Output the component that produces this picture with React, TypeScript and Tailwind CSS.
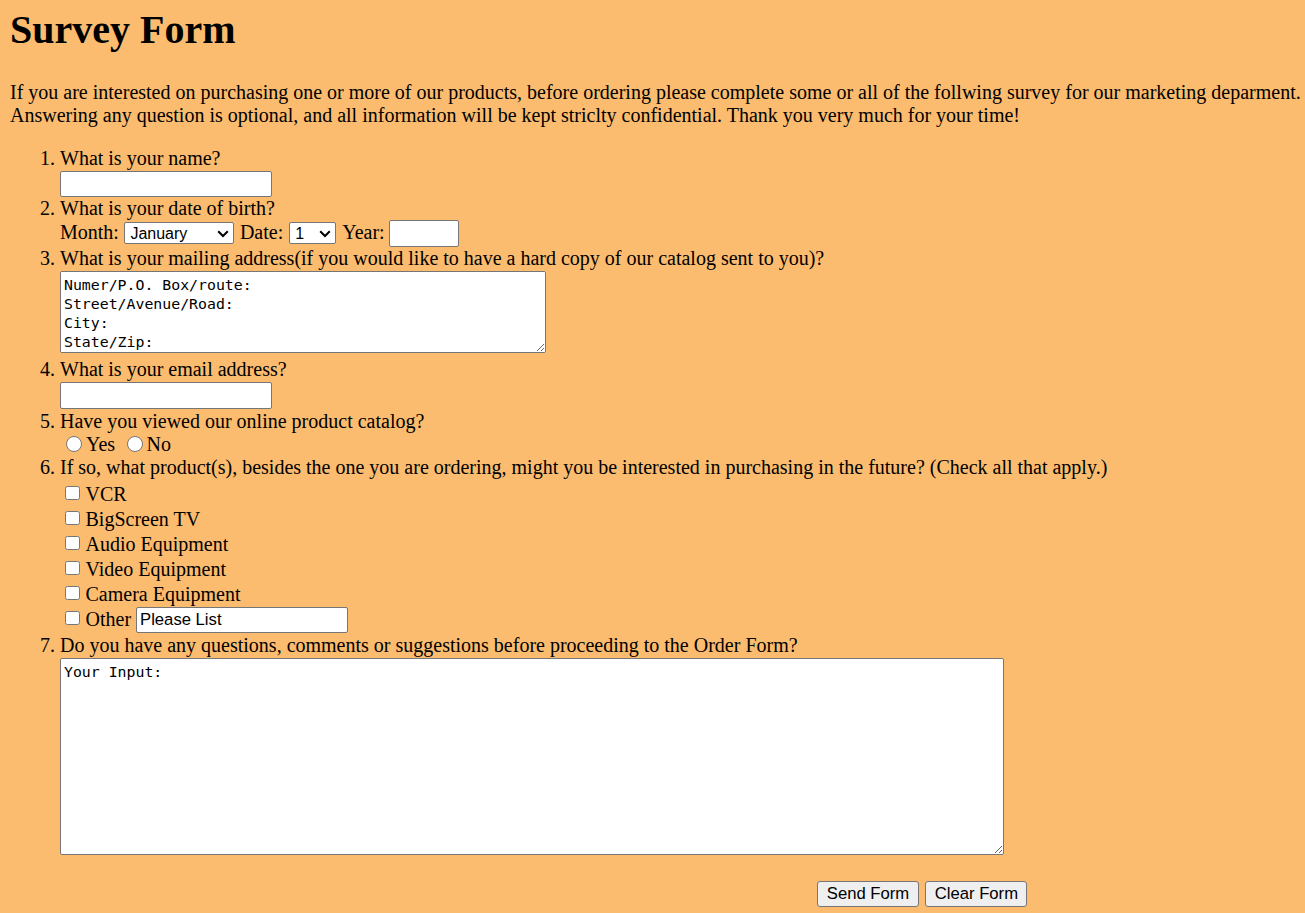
import { ReactNode } from "react";

const field =
  "block appearance-none rounded-[2px] border border-[#767676] bg-white px-[3px] text-[16.67px] leading-[19px] text-black font-['Liberation_Sans',Arial,sans-serif] outline-none";
const area =
  "block resize rounded-[2px] border border-[#767676] bg-white pl-[3px] pt-[4px] pb-[1px] text-[14.85px] leading-[19px] text-black font-['DejaVu_Sans_Mono','Liberation_Mono',monospace] outline-none";
const button =
  "h-[26px] w-[102px] rounded-[3px] border border-[#767676] bg-[#efefef] text-[16.67px] leading-[19px] text-black font-['Liberation_Sans',Arial,sans-serif]";
const box =
  "ml-[5px] mr-[6px] mt-[7.2px] block h-[14.5px] w-[14.5px] appearance-none rounded-[2.5px] border border-[#767676] bg-white";
const radio =
  "mt-[3.5px] block h-[16px] w-[16px] appearance-none rounded-full border border-[#767676] bg-white";

function Chevron() {
  return (
    <svg
      className="pointer-events-none absolute right-[5px] top-[8px]"
      width="12"
      height="8"
      viewBox="0 0 12 8"
      fill="none"
    >
      <path d="M1.2 1.3 L6 6 L10.8 1.3" stroke="#000" strokeWidth="2" />
    </svg>
  );
}

function Select({ width, options }: { width: string; options: string[] }) {
  return (
    <div className="relative mt-[2px]">
      <select
        className={`block h-[22px] ${width} appearance-none rounded-[2px] border border-[#767676] bg-white pl-[5px] text-[16px] leading-[19px] text-black font-['Liberation_Sans',Arial,sans-serif] outline-none`}
      >
        {options.map((o) => (
          <option key={o}>{o}</option>
        ))}
      </select>
      <Chevron />
    </div>
  );
}

function Check({ children }: { children: ReactNode }) {
  return (
    <div className="flex h-[25px] items-start">
      <input type="checkbox" className={box} />
      <span className="mt-[4.25px]">{children}</span>
    </div>
  );
}

function Label({ children }: { children: ReactNode }) {
  return <div className="h-[23px]">{children}</div>;
}

const months = [
  "January",
  "February",
  "March",
  "April",
  "May",
  "June",
  "July",
  "August",
  "September",
  "October",
  "November",
  "December",
];
const days = Array.from({ length: 31 }, (_, i) => String(i + 1));

export default function App() {
  return (
    <div className="min-h-screen bg-[#fbbc6f] px-[10px] pt-[7px] pb-[6px] text-[20px] leading-[23px] text-black font-['Liberation_Serif','Times_New_Roman',serif]">
      <h1 className="mb-[28px] text-[40px] font-bold leading-[46px]">Survey Form</h1>

      <p className="whitespace-nowrap">
        If you are interested on purchasing one or more of our products, before ordering please
        complete some or all of the follwing survey for our marketing deparment.
        <br />
        Answering any question is optional, and all information will be kept striclty
        confidential. Thank you very much for your time!
      </p>

      {/* rows are flex so the inputs' top margins stay inside them */}
      <ol className="mb-[20px] mt-[20px] list-decimal pl-[50px]">
        <li>
          <Label>What is your name?</Label>
          <div className="flex h-[27px] items-start">
            <input type="text" className={`${field} mt-[0.7px] h-[26px] w-[212px]`} />
          </div>
        </li>

        <li>
          <Label>What is your date of birth?</Label>
          <div className="flex h-[27px] items-start">
            <span className="mt-[1px]">Month:</span>
            <div className="ml-[5.5px]">
              <Select width="w-[110px]" options={months} />
            </div>
            <span className="ml-[5.5px] mt-[1px]">Date:</span>
            <div className="ml-[6px]">
              <Select width="w-[47px]" options={days} />
            </div>
            <span className="ml-[6px] mt-[1px]">Year:</span>
            <input type="text" className={`${field} ml-[4px] h-[27px] w-[70px]`} />
          </div>
        </li>

        <li>
          <Label>
            What is your mailing address(if you would like to have a hard copy of our catalog sent
            to you)?
          </Label>
          <div className="flex h-[88px] items-start">
            <textarea
              className={`${area} mt-[1px] h-[82px] w-[486px]`}
              defaultValue={"Numer/P.O. Box/route:\nStreet/Avenue/Road:\nCity:\nState/Zip:"}
            />
          </div>
        </li>

        <li>
          <Label>What is your email address?</Label>
          <div className="flex h-[28.5px] items-start">
            <input type="email" className={`${field} mt-[1.3px] h-[26.5px] w-[212px]`} />
          </div>
        </li>

        <li>
          <Label>Have you viewed our online product catalog?</Label>
          <div className="flex h-[23px] items-start">
            <input type="radio" name="viewed" className={`${radio} ml-[6px] mr-[4px]`} />
            <span>Yes</span>
            <input type="radio" name="viewed" className={`${radio} ml-[12px] mr-[3.5px]`} />
            <span>No</span>
          </div>
        </li>

        <li>
          <Label>
            If so, what product(s), besides the one you are ordering, might you be interested in
            purchasing in the future? (Check all that apply.)
          </Label>
          <Check>VCR</Check>
          <Check>BigScreen TV</Check>
          <Check>Audio Equipment</Check>
          <Check>Video Equipment</Check>
          <Check>Camera Equipment</Check>
          <div className="flex h-[30px] items-start">
            <input type="checkbox" className={box} />
            <span className="mt-[4.25px]">Other</span>
            <input
              type="text"
              defaultValue="Please List"
              className={`${field} ml-[5px] mt-[3.8px] h-[26px] w-[212px]`}
            />
          </div>
        </li>

        <li>
          <Label>
            Do you have any questions, comments or suggestions before proceeding to the Order Form?
          </Label>
          <div className="flex h-[202.5px] items-start">
            <textarea
              className={`${area} mt-[1px] h-[197px] w-[944px]`}
              defaultValue="Your Input:"
            />
          </div>
        </li>
      </ol>

      <div className="flex gap-[6.4px] pl-[807px] pt-[1.7px]">
        <button type="submit" className={button}>
          Send Form
        </button>
        <button type="reset" className={button}>
          Clear Form
        </button>
      </div>
    </div>
  );
}
